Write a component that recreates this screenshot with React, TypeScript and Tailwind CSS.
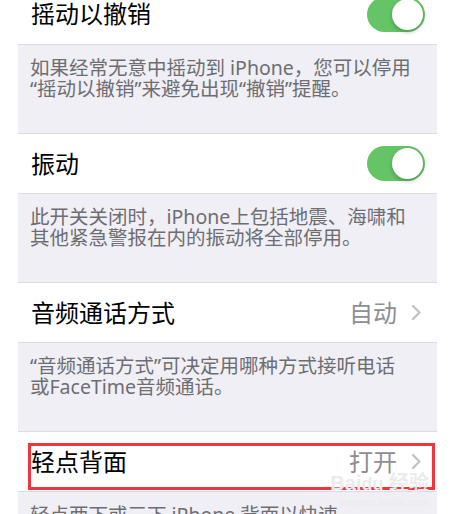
import type { ReactNode } from 'react';

const font = { fontFamily: '"Noto Sans", "Noto Sans CJK SC", sans-serif' };

function Toggle() {
  return (
    <div className="relative h-[35px] w-[58px] rounded-full bg-[#65c466]">
      <div className="absolute right-[2px] top-[2px] h-[31px] w-[31px] rounded-full bg-white shadow-[0_2px_4px_rgba(0,0,0,0.25)]" />
    </div>
  );
}

function Chevron() {
  return (
    <svg width="11" height="17" viewBox="0 0 11 17" className="ml-[14px]">
      <path d="M2 2 L8.5 8.5 L2 15" fill="none" stroke="#c4c4c7" strokeWidth="2.4" strokeLinecap="round" strokeLinejoin="round" />
    </svg>
  );
}

function Row({ label, right, className = '', children }: { label: string; right: ReactNode; className?: string; children?: ReactNode }) {
  return (
    <div className={`relative flex h-[61px] items-center justify-between border-y border-[#dcdce0] bg-white pl-[13px] pr-[12px] ${className}`}>
      <span className="text-[24px] leading-none text-black">{label}</span>
      {right}
      {children}
    </div>
  );
}

function Value({ text }: { text: string }) {
  return (
    <div className="flex items-center pr-[3px]">
      <span className="text-[24px] leading-none text-[#8e8e93]">{text}</span>
      <Chevron />
    </div>
  );
}

function Note({ lines }: { lines: string[] }) {
  return (
    <div className="h-[88px] bg-[#f0eff5] px-[12px] pt-[12px] text-[19.5px] leading-[21px] text-[#6d6d72]">
      {lines.map(l => (
        <div key={l} className="whitespace-nowrap">{l}</div>
      ))}
    </div>
  );
}

export default function App() {
  return (
    <div className="h-[514px] w-[457px] overflow-hidden bg-white" style={font}>
      <div className="ml-[18px] w-[419px]">
        <Row label="摇动以撤销" right={<Toggle />} className="-mt-[16px] border-t-0" />
        <Note lines={['如果经常无意中摇动到 iPhone，您可以停用', '“摇动以撤销”来避免出现“撤销”提醒。']} />
        <Row label="振动" right={<Toggle />} />
        <Note lines={['此开关关闭时，iPhone上包括地震、海啸和', '其他紧急警报在内的振动将全部停用。']} />
        <Row label="音频通话方式" right={<Value text="自动" />} className="h-[60px]" />
        <Note lines={['“音频通话方式”可决定用哪种方式接听电话', '或FaceTime音频通话。']} />
        <Row label="轻点背面" right={<Value text="打开" />} className="h-[60px]">
          <div className="pointer-events-none absolute bottom-[1px] left-[10px] right-[2px] top-[11px] border-[3px] border-[#f2343d]" />
          <div className="pointer-events-none absolute right-[8px] top-[41px] flex flex-col items-end leading-none text-[#ebebeb]" style={{ fontFamily: '"Liberation Sans", "Noto Sans CJK SC", sans-serif' }}>
            <span className="text-[20px] font-bold">Bai<span className="text-[18px]">du</span> 经验</span>
            <span className="mt-[4px] text-[11px]">jingyan.baidu.com</span>
          </div>
        </Row>
        <Note lines={['轻点两下或三下 iPhone 背面以快速']} />
      </div>
    </div>
  );
}
